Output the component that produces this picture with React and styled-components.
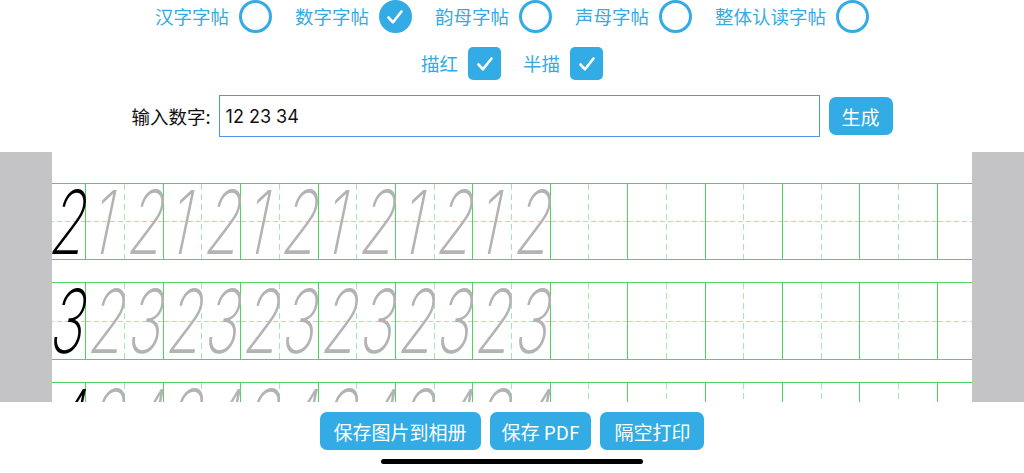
// number copybook page
import React, { useLayoutEffect, useRef } from "react";
import styled, { createGlobalStyle } from "styled-components";

const BLUE = "#33abe4";
const GREEN = "#4fd360";
const DASH = "#9fe8b0";

const GlobalStyle = createGlobalStyle`
  html, body {
    margin: 0;
    padding: 0;
    background: #fff;
  }
  body {
    font-family: "Noto Sans CJK SC", "Noto Sans", sans-serif;
  }
`;

const Page = styled.div`
  width: 1024px;
  height: 473px;
  display: flex;
  flex-direction: column;
  align-items: center;
  overflow: hidden;
`;

const OptionRow = styled.div`
  display: flex;
  align-items: center;
  height: 33px;
  gap: 23px;
`;

const CheckRow = styled.div`
  display: flex;
  align-items: center;
  margin-top: 14px;
  height: 33px;
  gap: 22px;
`;

const Option = styled.label`
  display: flex;
  align-items: center;
  gap: 10px;
  color: ${BLUE};
  font-size: 18.5px;
  line-height: 1;
`;

const Radio = styled.span`
  width: 33px;
  height: 33px;
  box-sizing: border-box;
  border-radius: 50%;
  border: 3px solid ${BLUE};
  background: ${(p) => (p.$on ? BLUE : "transparent")};
  display: flex;
  align-items: center;
  justify-content: center;
`;

const Box = styled.span`
  width: 33px;
  height: 33px;
  border-radius: 5px;
  background: ${BLUE};
  display: flex;
  align-items: center;
  justify-content: center;
`;

const InputRow = styled.div`
  display: flex;
  align-items: center;
  margin-top: 15px;
  height: 42px;
`;

const Label = styled.span`
  font-size: 18.5px;
  color: #111;
  margin-right: 8px;
`;

const Field = styled.div`
  width: 601px;
  height: 42px;
  box-sizing: border-box;
  border: 1.5px solid #4d95ee;
  display: flex;
  align-items: center;
  padding-left: 6px;
  font-family: "Inter", "Liberation Sans", sans-serif;
  font-size: 18px;
  color: #111;
`;

const BlueButton = styled.button`
  height: 38px;
  padding: 0 ${(p) => p.$pad || 14}px;
  border: none;
  border-radius: 7px;
  background: ${BLUE};
  color: #fff;
  font-family: "Noto Sans CJK SC", "Noto Sans", sans-serif;
  font-size: 19px;
  line-height: 1;
  margin-left: ${(p) => p.$ml || 0}px;
`;

const Sheet = styled.div`
  align-self: stretch;
  display: flex;
  margin-top: 15px;
  height: 250px;
`;

const Side = styled.div`
  width: 52px;
  background: #c4c4c6;
`;

const Viewport = styled.div`
  flex: 1;
  overflow-x: auto;
  overflow-y: hidden;
  scrollbar-width: none;
  padding-top: 31px;
  display: flex;
  flex-direction: column;
  gap: 22px;
  &::-webkit-scrollbar {
    display: none;
  }
`;

const GridRow = styled.div`
  display: flex;
  flex: none;
  width: max-content;
  height: 77.4px;
  box-sizing: border-box;
  border-top: 1px solid ${GREEN};
  border-bottom: 1px solid ${GREEN};
`;

const Cell = styled.div`
  width: 77.4px;
  height: 100%;
  box-sizing: border-box;
  border-right: 1px solid ${GREEN};
  display: flex;
  padding-top: 2px;
  background-image: repeating-linear-gradient(
      to right,
      ${DASH} 0 5px,
      transparent 5px 8px
    ),
    repeating-linear-gradient(to bottom, ${DASH} 0 6px, transparent 6px 10px);
  background-size: 100% 1px, 1px 100%;
  background-position: 0 50%, 50% 0;
  background-repeat: no-repeat;
`;

const Digit = styled.span`
  width: 50%;
  text-align: center;
  font-family: "Inter", "Roboto", sans-serif;
  font-weight: 250;
  font-size: 88px;
  line-height: 73px;
  color: ${(p) => (p.$dark ? "#000" : "#b3b3b3")};
  transform: scaleX(0.64) skewX(-18deg);
`;

const ButtonRow = styled.div`
  display: flex;
  gap: 9px;
  margin-top: 10px;
`;

const HomeBar = styled.div`
  width: 262px;
  height: 5px;
  border-radius: 3px;
  background: #000;
  margin-top: 9px;
`;

const Tick = () => (
  <svg width="24" height="24" viewBox="0 0 24 24" fill="none">
    <path
      d="M5.5 12.5l4.5 4.8L18.5 6.5"
      stroke="#fff"
      strokeWidth="2.6"
      strokeLinecap="round"
      strokeLinejoin="round"
    />
  </svg>
);

const kinds = [
  { name: "汉字字帖" },
  { name: "数字字帖", on: true },
  { name: "韵母字帖" },
  { name: "声母字帖" },
  { name: "整体认读字帖" },
];

const words = ["12", "23", "34"];
const COLS = 13;
const TRACES = 6;

function Row({ word }) {
  const cells = [];
  for (let i = 0; i < COLS; i++) {
    const filled = i <= TRACES;
    cells.push(
      <Cell key={i}>
        {filled &&
          word.split("").map((d, k) => (
            <Digit key={k} $dark={i === 0}>
              {d}
            </Digit>
          ))}
      </Cell>
    );
  }
  return <GridRow>{cells}</GridRow>;
}

export default function App() {
  const scroller = useRef(null);

  useLayoutEffect(() => {
    // page is shown scrolled a bit to the right
    if (scroller.current) scroller.current.scrollLeft = 43;
  }, []);

  return (
    <Page>
      <GlobalStyle />
      <OptionRow>
        {kinds.map((k) => (
          <Option key={k.name}>
            {k.name}
            <Radio $on={k.on}>{k.on && <Tick />}</Radio>
          </Option>
        ))}
      </OptionRow>
      <CheckRow>
        <Option>
          描红
          <Box>
            <Tick />
          </Box>
        </Option>
        <Option>
          半描
          <Box>
            <Tick />
          </Box>
        </Option>
      </CheckRow>
      <InputRow>
        <Label>输入数字:</Label>
        <Field>12 23 34</Field>
        <BlueButton $ml={9} $pad={13}>
          生成
        </BlueButton>
      </InputRow>
      <Sheet>
        <Side />
        <Viewport ref={scroller}>
          {words.map((w) => (
            <Row key={w} word={w} />
          ))}
        </Viewport>
        <Side />
      </Sheet>
      <ButtonRow>
        <BlueButton>保存图片到相册</BlueButton>
        <BlueButton $pad={12}>保存 PDF</BlueButton>
        <BlueButton>隔空打印</BlueButton>
      </ButtonRow>
      <HomeBar />
    </Page>
  );
}
